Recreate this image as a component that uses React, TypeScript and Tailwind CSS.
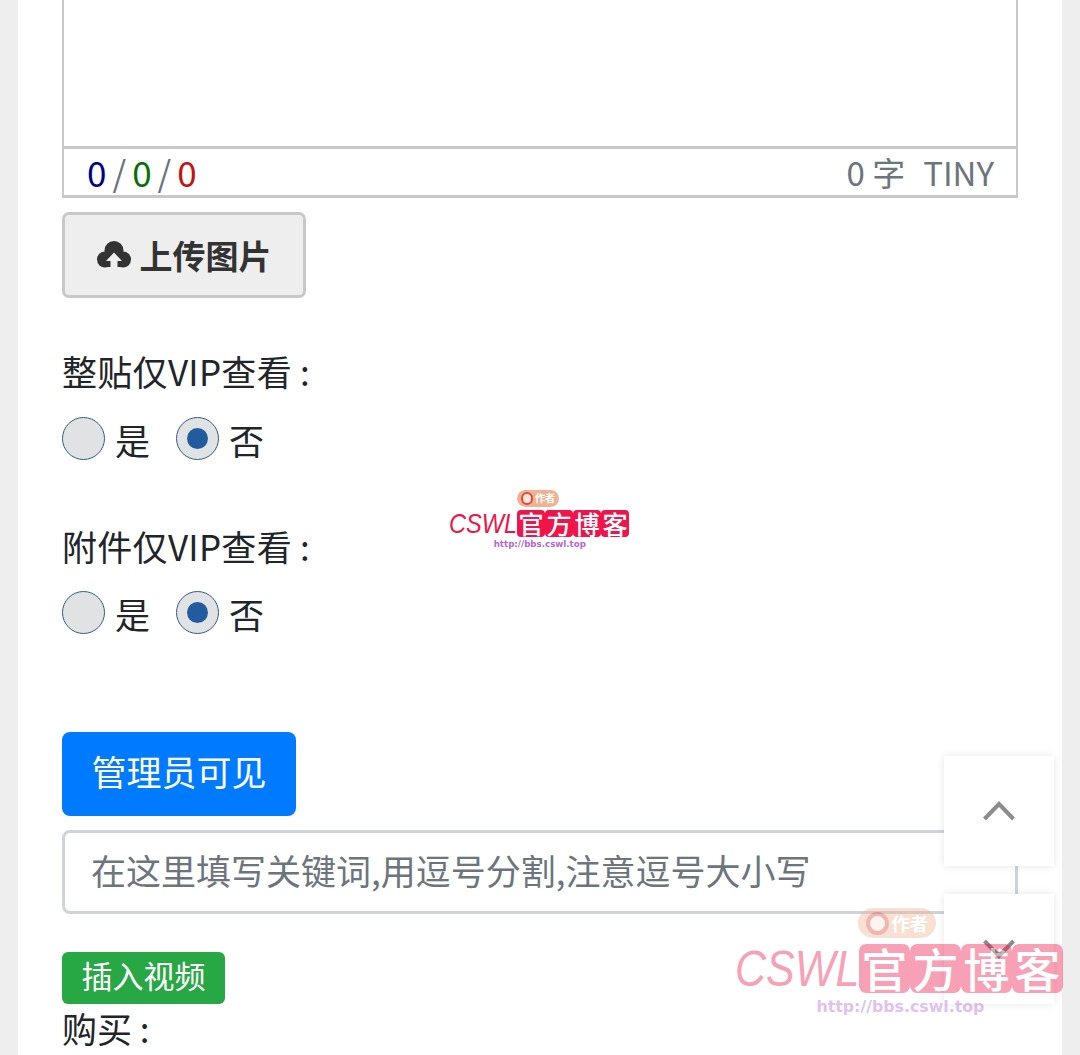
const font = { fontFamily: '"Noto Sans CJK SC", "Noto Sans", sans-serif' };

function CloudIcon() {
  return (
    <svg width="34" height="28" viewBox="0 0 34 28" className="mr-[9px] shrink-0" aria-hidden="true">
      <g fill="#333333">
        <circle cx="17" cy="9.5" r="9.5" />
        <circle cx="8" cy="18.5" r="8" />
        <circle cx="26" cy="18.5" r="8" />
        <rect x="8" y="14" width="18" height="12" />
      </g>
      <path d="M17 11.5 25 20H20.5V28H13.5V20H9Z" fill="#eeeeee" />
    </svg>
  );
}

function Radio({ checked }: { checked?: boolean }) {
  return (
    <span className="flex h-[43px] w-[43px] items-center justify-center rounded-full border border-[#2f5f86] bg-[#e1e2e4]">
      {checked && <span className="h-[21px] w-[21px] rounded-full bg-[#225c9f]" />}
    </span>
  );
}

function RadioGroup() {
  return (
    <div className="flex h-[43px] items-center text-[35px] leading-[45px] text-[#212529]">
      <Radio />
      <span className="ml-[10px] h-[43px] w-[61px]">是</span>
      <Radio checked />
      <span className="ml-[10px] h-[43px]">否</span>
    </div>
  );
}

function Watermark({ className }: { className: string }) {
  return (
    <div className={`pointer-events-none absolute w-[6.4em] ${className}`}>
      <div className="absolute left-[6.7em] top-0 flex h-[1.64em] w-[4.25em] items-center justify-center gap-[0.15em] rounded-full bg-[#efb394] text-[0.36em] leading-none text-white">
        <span className="h-[1.25em] w-[1.25em] shrink-0 rounded-full border-[0.25em] border-[#e0483c] bg-[#fbe5dc]" />
        <span className="font-bold">作者</span>
      </div>
      <div className="flex h-[1.67em] items-center pt-[0.7em]">
        <span className="flex h-[0.97em] w-[2.43em] shrink-0 items-center whitespace-nowrap leading-none">
          <span
            className="block origin-left scale-x-[0.87] text-[0.97em] italic leading-none text-[#f0144a]"
            style={{ fontFamily: '"Liberation Sans", sans-serif' }}
          >
            CSWL
          </span>
        </span>
        {["官", "方", "博", "客"].map((c) => (
          <span
            key={c}
            className="flex h-[0.97em] w-[1em] shrink-0 items-center justify-center rounded-[0.14em] bg-[#f0144a] leading-none text-white"
          >
            <span className="text-[0.9em] font-medium leading-none">{c}</span>
          </span>
        ))}
      </div>
      <div
        className="mt-[0.4em] whitespace-nowrap pl-[5.15em] text-[0.31em] font-bold leading-none text-[#b565d8]"
        style={{ fontFamily: '"DejaVu Sans", sans-serif' }}
      >
        http://bbs.cswl.top
      </div>
    </div>
  );
}

function ScrollButton({ up }: { up?: boolean }) {
  return (
    <div className="flex h-[110px] w-[110px] items-center justify-center bg-white shadow-[0_0_8px_rgba(0,0,0,0.1)]">
      <svg width="32" height="20" viewBox="0 0 32 20" fill="none" stroke="#8c8c8c" strokeWidth="4">
        <path d={up ? "M1.5 18 16 3l14.5 15" : "M1.5 2 16 17 30.5 2"} />
      </svg>
    </div>
  );
}

export default function App() {
  return (
    <div className="relative h-[1055px] w-[1080px] overflow-hidden bg-[#eeeeee]" style={font}>
      <div className="ml-[18px] h-full w-[1044px] bg-white px-[44px]">
        {/* editor */}
        <div className="h-[149px] border-x-[2px] border-b-[3px] border-[#c8c8c8] bg-white" />
        <div className="flex h-[49px] items-center justify-between border-x-[2px] border-b-[3px] border-[#c8c8c8] pl-[23px] pr-[22px] text-[33px] leading-none">
          <div className="flex items-center pb-[2px] text-[35px]">
            <span className="text-[#00008b]">0</span>
            <span className="mx-[6px] text-[#6c757d]">/</span>
            <span className="text-[#067006]">0</span>
            <span className="mx-[6px] text-[#6c757d]">/</span>
            <span className="text-[#c51313]">0</span>
          </div>
          <div className="flex items-center text-[#6c757d]">
            <span>0 字</span>
            <span className="ml-[18px]">TINY</span>
          </div>
        </div>

        <button className="mt-[14px] flex h-[86px] w-[244px] items-center justify-center rounded-[7px] border-[3px] border-[#c8c8c8] bg-[#eeeeee] text-[33px] font-bold leading-none text-[#333333]">
          <CloudIcon />
          上传图片
        </button>

        <div className="mt-[49px] h-[48px] text-[35px] leading-[48px] tracking-[0.3px] text-[#212529]">整贴仅VIP查看 :</div>
        <div className="mt-[22px]">
          <RadioGroup />
        </div>

        <div className="mt-[62px] h-[48px] text-[35px] leading-[48px] tracking-[0.3px] text-[#212529]">附件仅VIP查看 :</div>
        <div className="mt-[21px]">
          <RadioGroup />
        </div>

        <button className="mt-[98px] flex h-[84px] w-[234px] items-center justify-center rounded-[8px] bg-[#007bff] pb-[8px] text-[35px] leading-none text-white">
          管理员可见
        </button>

        <div className="mt-[14px] flex h-[84px] items-center rounded-[8px] border-[3px] border-[#ced4da] pb-[6px] pl-[26px] text-[35px] leading-none text-[#6c757d]">
          在这里填写关键词,用逗号分割,注意逗号大小写
        </div>

        <button className="mt-[38px] flex h-[52px] w-[163px] items-center justify-center rounded-[6px] bg-[#28a745] pb-[8px] text-[31px] leading-none text-white">
          插入视频
        </button>

        <div className="h-[48px] text-[35px] leading-[48px] text-[#212529]">购买 :</div>
      </div>

      <div className="absolute left-[944px] top-[756px] flex flex-col gap-[28px]">
        <ScrollButton up />
        <ScrollButton />
      </div>

      <Watermark className="left-[449px] top-[490px] text-[28px]" />
      <Watermark className="left-[735px] top-[908px] text-[51px] opacity-40" />
    </div>
  );
}
